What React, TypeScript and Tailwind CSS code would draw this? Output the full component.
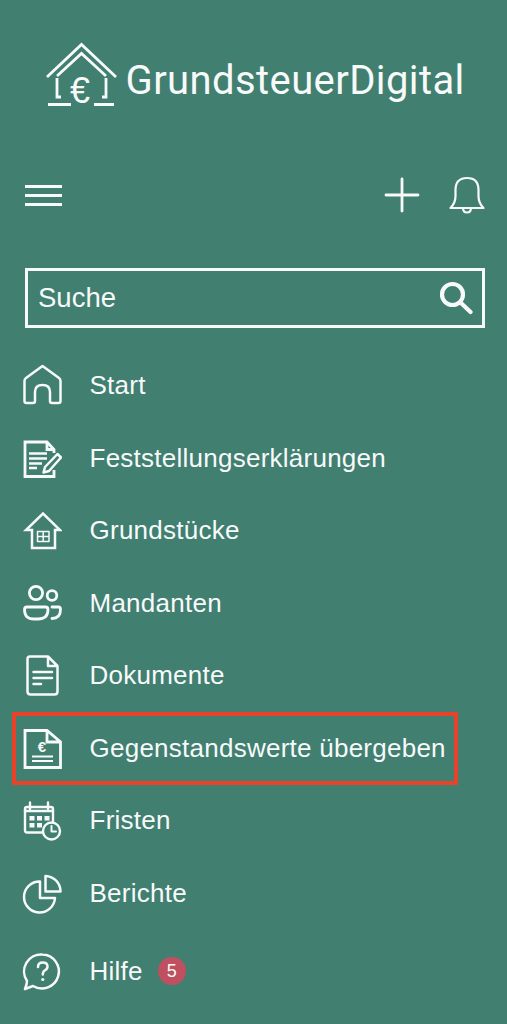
import React from 'react';

const sw = { fill: 'none', stroke: 'currentColor', strokeWidth: 2.5, strokeLinecap: 'round', strokeLinejoin: 'round' } as const;

const Icon = ({ children }: { children: React.ReactNode }) => (
  <svg width="40" height="44" viewBox="0 0 40 44" className="shrink-0" {...sw}>
    {children}
  </svg>
);

const HomeIcon = () => (
  <Icon>
    <path d="M20.5 3 L37 15 Q38.5 16 38.5 18 V38 Q38.5 40 36.5 40 H30 Q28 40 28 38 V29 Q28 22 20.5 22 Q13 22 13 29 V38 Q13 40 11 40 H4.5 Q2.5 40 2.5 38 V18 Q2.5 16 4 15 Z" />
  </Icon>
);

const FormIcon = () => (
  <Icon>
    <path d="M32 34 V40.5 H3 V6 H25 L32 13.5 V17 M25 6 V13.5 H32" strokeLinecap="butt" strokeLinejoin="miter" strokeWidth="2.8" />
    <path d="M7 17.5 H25 M7 22.5 H25 M7 27.5 H20 M7 32 H15" strokeLinecap="butt" strokeWidth="2.4" />
    <path d="M35.5 18 L39 21.5 L27 35 L21.5 36.5 L23 31 Z" />
  </Icon>
);

const PropertyIcon = () => (
  <Icon>
    <path d="M10 22 H4 L21 5.5 L38 22 H33 V40 H10 Z" strokeLinecap="butt" strokeLinejoin="miter" />
    <path d="M15.5 23.5 H27 V33.5 H15.5 Z M21.2 23.5 V33.5 M15.5 28.5 H27" strokeWidth="1.5" strokeLinecap="butt" />
  </Icon>
);

const ClientsIcon = () => (
  <Icon>
    <circle cx="14" cy="12" r="6.6" strokeWidth="2.8" />
    <circle cx="30" cy="14.5" r="4.8" strokeWidth="2.8" />
    <path d="M5 26 H23.5 Q26 26 26 28.5 Q26 38 16 38 H12 Q2.5 38 2.5 28.5 Q2.5 26 5 26 Z" strokeWidth="2.8" />
    <path d="M30 26 H36.5 Q38.5 26 38.5 28.5 Q38.5 37.5 30 37.5" strokeWidth="2.8" />
  </Icon>
);

const DocIcon = () => (
  <Icon>
    <path d="M8 3.5 H26 L35.5 13 V38.5 Q35.5 41.5 32.5 41.5 H8.5 Q5.5 41.5 5.5 38.5 V6 Q5.5 3.5 8 3.5 Z M26 3.5 V13 H35.5" />
    <path d="M11.5 19 H30 M11.5 25 H30 M11.5 31 H19" />
  </Icon>
);

const ValueDocIcon = () => (
  <Icon>
    <path d="M3 4.5 H25 L38.5 16 V41.5 H3 Z M25 4.5 V16 H38.5" strokeLinecap="butt" strokeLinejoin="miter" strokeWidth="2.8" />
    <text x="20" y="25.5" textAnchor="middle" fill="currentColor" stroke="none" fontSize="15" fontWeight="700" fontFamily="'Liberation Sans', sans-serif">€</text>
    <path d="M10 30.5 H31 M10 35 H31" strokeLinecap="butt" strokeWidth="2.2" />
  </Icon>
);

const DeadlineIcon = () => (
  <Icon>
    <path d="M20 34.5 H5 Q3 34.5 3 32.5 V11 Q3 9 5 9 H29 Q31 9 31 11 V23" strokeWidth="2.4" />
    <path d="M3 13 H31" strokeWidth="2.4" />
    <path d="M8 4.5 V11 M26 4.5 V11" strokeWidth="2.4" />
    <path d="M7.5 18 h5 v4.5 h-5z M15 18 h5 v4.5 h-5z M22.5 18 h5 v4.5 h-5z M7.5 25 h5 v4.5 h-5z M15 25 h5 v4.5 h-5z" fill="currentColor" stroke="none" />
    <circle cx="29.5" cy="33" r="8.5" strokeWidth="2.4" />
    <path d="M29.5 28 V33.5 H34" strokeWidth="2" />
  </Icon>
);

const ReportsIcon = () => (
  <Icon>
    <path d="M18 10.5 A15.5 15.5 0 1 0 33 27 H18 Z" />
    <path d="M23.5 5 A15.5 15.5 0 0 1 38.5 20.5 H23.5 Z" />
  </Icon>
);

const HelpIcon = () => (
  <Icon>
    <path d="M20.5 5.5 A17 17 0 1 1 11 37 L3 40 Q5 35 5 32 A17 17 0 0 1 20.5 5.5 Z" />
    <path d="M16 18 Q16 13.5 20.8 13.5 Q25.5 13.5 25.5 17.5 Q25.5 20 22.8 21.5 Q20.8 22.6 20.8 25.5" />
    <circle cx="20.8" cy="30.5" r="1.6" fill="currentColor" stroke="none" />
  </Icon>
);

const LogoMark = () => (
  <svg width="72" height="66" viewBox="0 0 72 66" fill="none" stroke="currentColor" strokeWidth="2.8" className="shrink-0 overflow-visible">
    <path d="M2 35 L36.5 2.5 L71 35" />
    <path d="M12 34 L36.5 11.5 L61 34" />
    <path d="M12 36 V55 H16 M61 36 V55 H57" />
    <path d="M3 62.5 H26 M49 62.5 H69" />
    <text x="35" y="61" textAnchor="middle" fill="currentColor" stroke="none" fontSize="36" fontFamily="'Liberation Sans', sans-serif">€</text>
  </svg>
);

const items = [
  { label: 'Start', icon: <HomeIcon /> },
  { label: 'Feststellungserklärungen', icon: <FormIcon /> },
  { label: 'Grundstücke', icon: <PropertyIcon /> },
  { label: 'Mandanten', icon: <ClientsIcon /> },
  { label: 'Dokumente', icon: <DocIcon /> },
  { label: 'Gegenstandswerte übergeben', icon: <ValueDocIcon />, marked: true },
  { label: 'Fristen', icon: <DeadlineIcon /> },
  { label: 'Berichte', icon: <ReportsIcon /> },
];

export default function App() {
  return (
    <div className="h-[1024px] w-[507px] overflow-hidden bg-[#417f71] text-[#f7faf9] font-['Liberation_Sans',sans-serif]">
      {/* logo */}
      <div className="flex h-[150px] items-start justify-center pr-[1px] pt-[42px]">
        <LogoMark />
        <span className="ml-[9px] mt-[14px] w-[336px] whitespace-nowrap font-['Roboto',sans-serif] text-[40px] leading-[50px] font-normal tracking-[0.4px]">
          GrundsteuerDigital
        </span>
      </div>

      {/* toolbar */}
      <div className="flex h-[90px] items-center justify-between pl-[25px] pr-[22px]">
        <div className="flex w-[37px] flex-col gap-[6px]">
          <div className="h-[3px] bg-[#f7faf9]" />
          <div className="h-[3px] bg-[#f7faf9]" />
          <div className="h-[3px] bg-[#f7faf9]" />
        </div>
        <div className="flex items-center gap-[29px]">
          <svg width="36" height="36" viewBox="0 0 36 36" fill="none" stroke="currentColor" strokeWidth="2.8" strokeLinecap="round">
            <path d="M18 2 V34 M2 18 H34" />
          </svg>
          <svg width="36" height="38" viewBox="0 0 36 38" fill="none" stroke="currentColor" strokeWidth="2.2" strokeLinejoin="round">
            <path d="M1.5 32 Q6.5 27 6.5 20 V14 Q6.5 2 18 2 Q29.5 2 29.5 14 V20 Q29.5 27 34.5 32 Z" />
            <path d="M14 32 Q14 36.5 18 36.5 Q22 36.5 22 32" />
          </svg>
        </div>
      </div>

      {/* search */}
      <div className="mt-[28px] ml-[25px] mr-[22px] flex h-[60px] items-center justify-between border-[3px] border-[#f7faf9] pl-[10px] pr-[9px]">
        <span className="text-[27.5px] leading-none">Suche</span>
        <svg width="34" height="34" viewBox="0 0 34 34" fill="none" stroke="currentColor" strokeWidth="4.2" strokeLinecap="round">
          <circle cx="13.5" cy="13.5" r="10.5" />
          <path d="M21.5 21.5 L31.5 31" />
        </svg>
      </div>

      {/* nav */}
      <nav className="mt-[21px] flex flex-col">
        {items.map((item) => (
          <div key={item.label} className="relative flex h-[72.5px] items-center pl-[22px]">
            {item.icon}
            <span className="ml-[27.5px] whitespace-nowrap text-[26px] leading-none tracking-[0.25px]">{item.label}</span>
            {item.marked && (
              <div className="absolute left-[12px] top-[0px] h-[73px] w-[446px] border-[4px] border-[#e8432a]" />
            )}
          </div>
        ))}
        <div className="mt-[6px] flex h-[72.5px] items-center pl-[22px]">
          <HelpIcon />
          <span className="ml-[27.5px] text-[26px] leading-none tracking-[0.25px]">Hilfe</span>
          <span className="ml-[15px] flex h-[28px] w-[28px] items-center justify-center rounded-full bg-[#c05060] text-[18px] leading-none">5</span>
        </div>
      </nav>
    </div>
  );
}
